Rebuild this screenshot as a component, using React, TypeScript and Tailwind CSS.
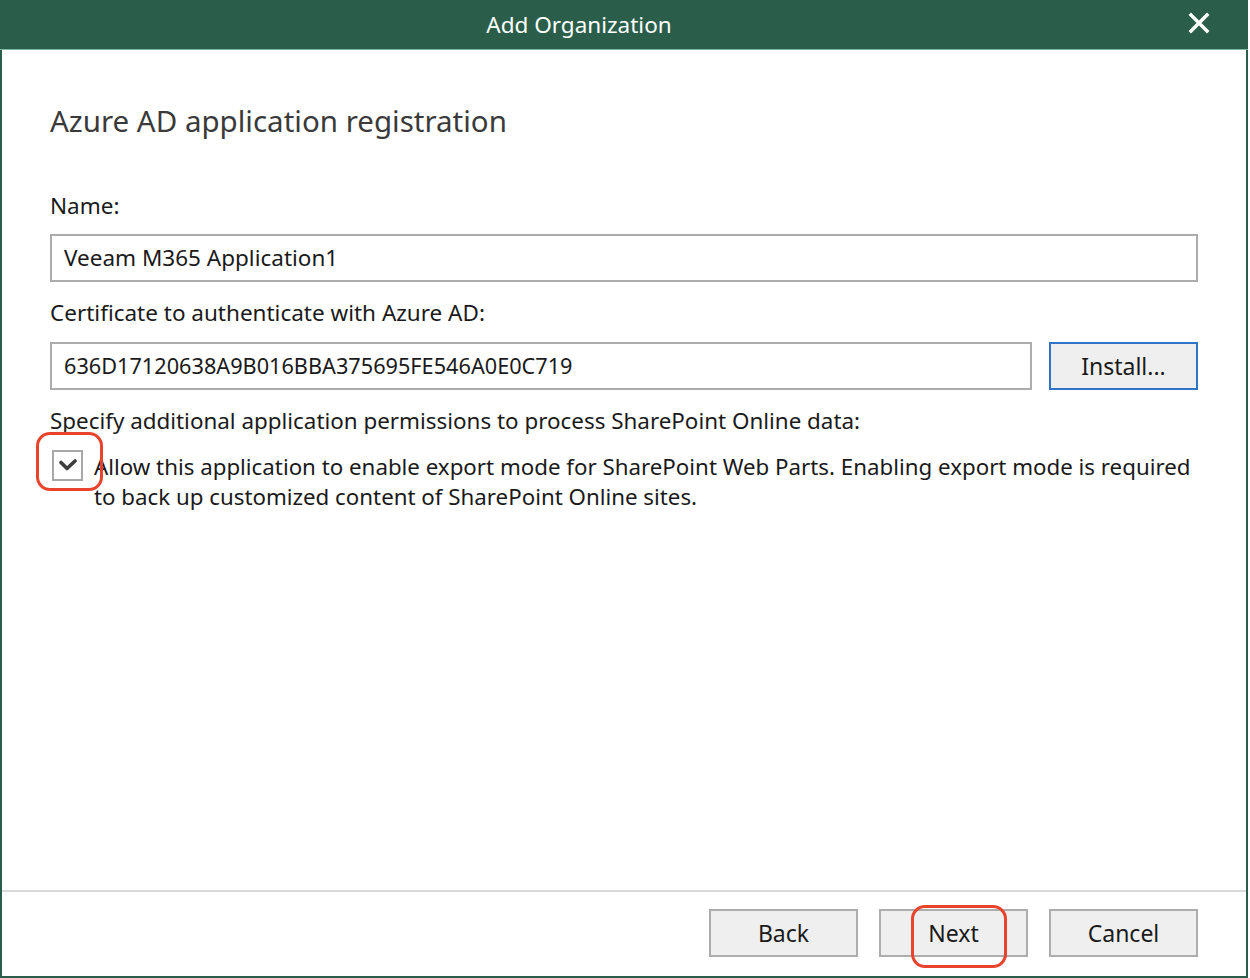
import React from "react";

const font = { fontFamily: '"Noto Sans", "Open Sans", sans-serif' };

function CheckIcon() {
  return (
    <svg width="20" height="13" viewBox="0 0 20 13" fill="none">
      <path d="M3 3.5 L9 9.5 L17 2" stroke="#3d3d3d" strokeWidth="3.6" strokeLinecap="round" strokeLinejoin="round" />
    </svg>
  );
}

function CloseIcon() {
  return (
    <svg width="22" height="22" viewBox="0 0 22 22">
      <path d="M3 3 L19 19 M19 3 L3 19" stroke="#ffffff" strokeWidth="3.4" strokeLinecap="square" />
    </svg>
  );
}

const WinButton = ({ label, focused }: { label: string; focused?: boolean }) => (
  <button
    className={`h-[48px] w-[149px] bg-[#efefef] text-[23px] text-[#1a1a1a] ${
      focused ? "border-2 border-[#2f74c8]" : "border-2 border-[#adadad]"
    }`}
  >
    {label}
  </button>
);

export default function App() {
  return (
    <div className="w-[1250px] h-[978px] bg-white" style={font}>
      <div className="w-[1248px] h-[978px] flex flex-col border-x-2 border-b-2 border-[#2a5e4b] bg-white">
        {/* title bar */}
        <div className="relative h-[50px] -mx-[2px] bg-[#2a5e4b] border-b border-[#7fb7a3] flex items-center justify-center pr-[90px]">
          <span className="text-white text-[22.5px]">Add Organization</span>
          <div className="absolute right-[38px] top-[12px]">
            <CloseIcon />
          </div>
        </div>

        <div className="flex-1 flex flex-col px-[48px] text-[#1a1a1a]">
          <h1 className="mt-[53px] text-[29.5px] text-[#3a3a3a] leading-[36px]">Azure AD application registration</h1>

          <div className="mt-[52px] text-[22.5px] leading-[30px]">Name:</div>
          <div className="mt-[13px] h-[48px] border-2 border-[#adadad] flex items-center px-[12px] text-[22.5px]">
            Veeam M365 Application1
          </div>

          <div className="mt-[16px] text-[22.5px] leading-[30px]">Certificate to authenticate with Azure AD:</div>
          <div className="mt-[14px] flex gap-[17px]">
            <div className="flex-1 h-[48px] border-2 border-[#adadad] flex items-center px-[12px] text-[21.7px]">
              636D17120638A9B016BBA375695FE546A0E0C719
            </div>
            <WinButton label="Install..." focused />
          </div>

          <div className="mt-[16px] text-[22.4px] leading-[30px]">
            Specify additional application permissions to process SharePoint Online data:
          </div>
          <div className="mt-[14px] flex items-start gap-[12px]">
            <div className="relative shrink-0 ml-[2px]">
              <div className="w-[31px] h-[31px] border-2 border-[#a8a8a8] bg-white flex items-center justify-center">
                <CheckIcon />
              </div>
              <div className="absolute -left-[16px] -top-[18px] w-[67px] h-[59px] rounded-[14px] border-[3.5px] border-[#e8432d]" />
            </div>
            <div className="mt-[2px] text-[22.3px] leading-[30px] -ml-[1px] whitespace-nowrap">
              Allow this application to enable export mode for SharePoint Web Parts. Enabling export mode is required
              <br />
              to back up customized content of SharePoint Online sites.
            </div>
          </div>
          <div className="flex-1" />
        </div>

        {/* footer */}
        <div className="h-[2px] bg-[#dadada]" />
        <div className="h-[84px] flex items-start justify-end gap-[21px] pt-[17px] pr-[48px]">
          <WinButton label="Back" />
          <div className="relative">
            <WinButton label="Next" />
            <div className="absolute left-[32px] -top-[4px] w-[96px] h-[63px] rounded-[14px] border-[3.5px] border-[#e8432d]" />
          </div>
          <WinButton label="Cancel" />
        </div>
      </div>
    </div>
  );
}
